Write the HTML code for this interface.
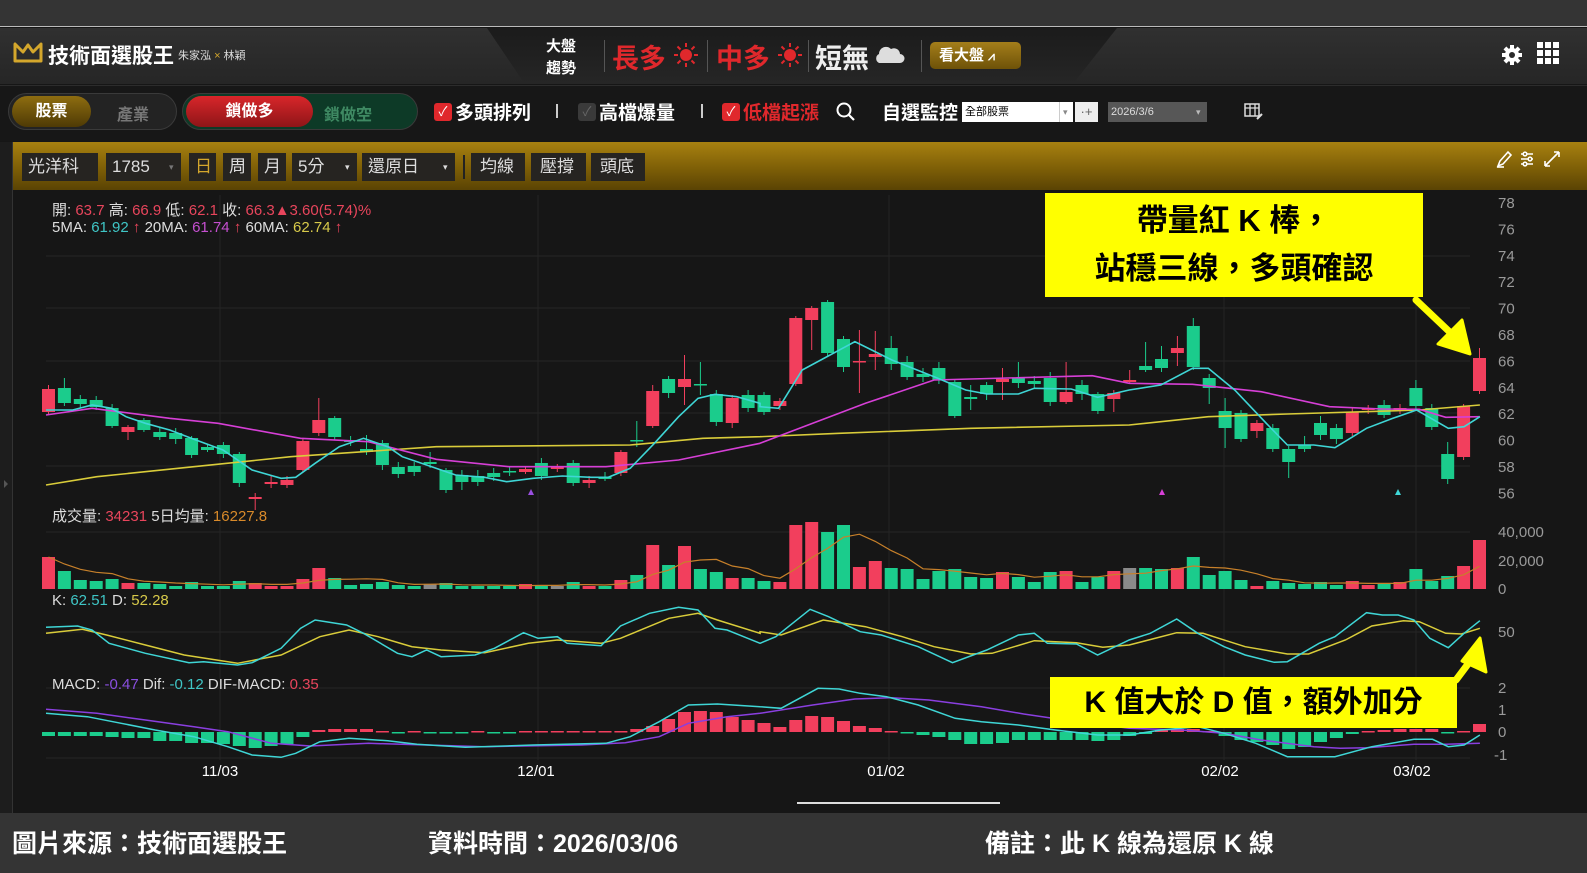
<!DOCTYPE html>
<html><head><meta charset="utf-8">
<style>
*{margin:0;padding:0;box-sizing:border-box}
body{width:1587px;height:873px;overflow:hidden;background:#161616;font-family:"Liberation Sans","Noto Sans CJK TC",sans-serif;position:relative;color:#fff}
.a{position:absolute}
.topbar{left:0;top:0;width:1587px;height:27px;background:#343434;border-bottom:1px solid #bbb}
.hdr{left:0;top:28px;width:1587px;height:56px;background:linear-gradient(#303030,#262626)}
.hc{left:487px;top:28px;width:630px;height:56px;background:linear-gradient(#1b1b1b,#262626);clip-path:polygon(0 0,100% 0,93% 100%,6% 100%)}
.row2{left:0;top:85px;width:1587px;height:56px;background:#171717;border-top:1px solid #2c2c2c}
.gold{left:13px;top:142px;width:1574px;height:48px;background:linear-gradient(#a88110,#7a5c06 60%,#5a4304)}
.box{position:absolute;top:153px;height:28px;background:#262421;color:#ddd;font-size:17px;line-height:28px;padding-left:6px}
.pill{position:absolute;border-radius:20px}
.cb{position:absolute;top:103px;width:18px;height:18px;border-radius:3px;font-size:13px;line-height:18px;text-align:center;color:#fff}
.t19{position:absolute;top:98px;font-size:19px;font-weight:bold}
.foot{left:0;top:813px;width:1587px;height:60px;background:#343434}
.ft{position:absolute;top:824px;font-size:25px;font-weight:bold;color:#fff}
</style></head><body>
<div class="a topbar"></div>
<div class="a hdr"></div>
<div class="a hc"></div>
<svg class="a" style="left:13px;top:40px" width="30" height="24" viewBox="0 0 30 24"><path d="M2 4 L2 21 L28 21 L28 4 L20 12 L15 5 L10 12 Z" fill="none" stroke="#d4a72c" stroke-width="3" stroke-linejoin="round"/></svg>
<div class="a" style="left:48px;top:40px;font-size:21px;font-weight:bold;color:#fff">技術面選股王</div>
<div class="a" style="left:178px;top:47px;font-size:11px;color:#ddd">朱家泓 <span style="color:#d4a72c">×</span> 林穎</div>
<div class="a" style="left:546px;top:36px;font-size:15px;font-weight:bold;line-height:22px;color:#fff">大盤<br>趨勢</div>
<div class="a" style="left:604px;top:40px;width:1px;height:32px;background:#555"></div>
<div class="a" style="left:612px;top:37px;font-size:27px;font-weight:bold;color:#e0282c">長多</div>
<svg class="a" style="left:673px;top:42px" width="26" height="26" viewBox="0 0 26 26"><circle cx="13" cy="13" r="6" fill="#e0282c"/><g stroke="#e0282c" stroke-width="2"><path d="M13 1v4M13 21v4M1 13h4M21 13h4M4.5 4.5l3 3M18.5 18.5l3 3M4.5 21.5l3-3M18.5 7.5l3-3"/></g></svg>
<div class="a" style="left:707px;top:40px;width:1px;height:32px;background:#555"></div>
<div class="a" style="left:716px;top:37px;font-size:27px;font-weight:bold;color:#e0282c">中多</div>
<svg class="a" style="left:777px;top:42px" width="26" height="26" viewBox="0 0 26 26"><circle cx="13" cy="13" r="6" fill="#e0282c"/><g stroke="#e0282c" stroke-width="2"><path d="M13 1v4M13 21v4M1 13h4M21 13h4M4.5 4.5l3 3M18.5 18.5l3 3M4.5 21.5l3-3M18.5 7.5l3-3"/></g></svg>
<div class="a" style="left:808px;top:40px;width:1px;height:32px;background:#555"></div>
<div class="a" style="left:815px;top:37px;font-size:27px;font-weight:bold;color:#eee">短無</div>
<svg class="a" style="left:873px;top:44px" width="32" height="20" viewBox="0 0 32 20"><path d="M6 19 A5 5 0 0 1 6 10 A7 7 0 0 1 18 5 A6 6 0 0 1 27 10 A4.5 4.5 0 0 1 27 19 Z" fill="#ddd"/></svg>
<div class="a" style="left:921px;top:40px;width:1px;height:32px;background:#555"></div>
<div class="a" style="left:930px;top:42px;width:91px;height:27px;border-radius:5px;background:linear-gradient(#a47e1a,#6e5208);font-size:15px;font-weight:bold;line-height:27px;padding-left:9px;color:#fff">看大盤 <span style="font-size:12px">⩘</span></div>
<svg class="a" style="left:1501px;top:44px" width="22" height="22" viewBox="0 0 22 22"><g fill="#fff"><circle cx="11" cy="11" r="7"/><rect x="9" y="1" width="4" height="20"/><rect x="1" y="9" width="20" height="4"/><rect x="9" y="1" width="4" height="20" transform="rotate(45 11 11)"/><rect x="9" y="1" width="4" height="20" transform="rotate(-45 11 11)"/></g><circle cx="11" cy="11" r="3" fill="#2a2a2a"/></svg>
<svg class="a" style="left:1537px;top:42px" width="22" height="22" viewBox="0 0 22 22"><g fill="#fff"><rect x="0" y="0" width="6" height="6"/><rect x="8" y="0" width="6" height="6"/><rect x="16" y="0" width="6" height="6"/><rect x="0" y="8" width="6" height="6"/><rect x="8" y="8" width="6" height="6"/><rect x="16" y="8" width="6" height="6"/><rect x="0" y="16" width="6" height="6"/><rect x="8" y="16" width="6" height="6"/><rect x="16" y="16" width="6" height="6"/></g></svg>

<div class="a row2"></div>
<div class="pill" style="left:8px;top:93px;width:169px;height:37px;background:#232323;border:1px solid #3a3a3a"></div>
<div class="pill" style="left:12px;top:96px;width:79px;height:31px;background:linear-gradient(#8e6d10,#4e3a05);font-size:16px;font-weight:bold;line-height:31px;text-align:center">股票</div>
<div class="a" style="left:117px;top:101px;font-size:16px;font-weight:bold;color:#777">產業</div>
<div class="pill" style="left:182px;top:93px;width:236px;height:37px;background:#0d3a27;border:1px solid #3a3a3a"></div>
<div class="pill" style="left:186px;top:96px;width:127px;height:31px;background:linear-gradient(#d8262a,#8e1518);font-size:16px;font-weight:bold;line-height:31px;text-align:center">鎖做多</div>
<div class="a" style="left:324px;top:101px;font-size:16px;font-weight:bold;color:#3f8a63">鎖做空</div>
<div class="cb" style="left:434px;background:#e0282c">✓</div>
<div class="t19" style="left:455px;color:#fff">多頭排列</div>
<div class="a" style="left:556px;top:104px;width:2px;height:14px;background:#ccc"></div>
<div class="cb" style="left:578px;background:#3a3a3a;color:#666">✓</div>
<div class="t19" style="left:599px;color:#fff">高檔爆量</div>
<div class="a" style="left:701px;top:104px;width:2px;height:14px;background:#ccc"></div>
<div class="cb" style="left:722px;background:#e0282c">✓</div>
<div class="t19" style="left:743px;color:#e0282c">低檔起漲</div>
<svg class="a" style="left:836px;top:102px" width="20" height="20" viewBox="0 0 20 20"><circle cx="8" cy="8" r="6.5" fill="none" stroke="#fff" stroke-width="2"/><path d="M13 13l5 5" stroke="#fff" stroke-width="2.2"/></svg>
<div class="t19" style="left:882px;color:#fff">自選監控</div>
<div class="a" style="left:962px;top:102px;width:111px;height:20px;background:#fff;color:#000;font-size:11px;line-height:20px;padding-left:3px">全部股票<span style="position:absolute;left:97px;top:0;color:#888;border-left:1px solid #ccc;padding-left:3px;font-size:9px">▾</span></div>
<div class="a" style="left:1075px;top:102px;width:23px;height:20px;background:#eee;color:#666;font-size:13px;line-height:20px;text-align:center">·+</div>
<div class="a" style="left:1108px;top:102px;width:99px;height:20px;background:#575757;color:#ddd;font-size:11px;line-height:20px;padding-left:3px">2026/3/6<span style="position:absolute;left:88px;font-size:9px;color:#bbb">▾</span></div>
<svg class="a" style="left:1244px;top:103px" width="20" height="18" viewBox="0 0 20 18"><rect x="1" y="1" width="14" height="12" fill="none" stroke="#ddd" stroke-width="1.5"/><path d="M1 5h14M6 1v12M11 1v12" stroke="#ddd" stroke-width="1.3"/><path d="M13 16l5-5" stroke="#ddd" stroke-width="2"/></svg>

<div class="a gold"></div>
<div class="a" style="left:0;top:142px;width:13px;height:671px;background:#1d1d1d;border-right:1px solid #333"></div>
<div class="box" style="left:22px;width:76px">光洋科</div>
<div class="box" style="left:106px;width:75px">1785<span style="position:absolute;left:63px;font-size:9px;color:#777">▾</span></div>
<div class="box" style="left:189px;width:27px;color:#d4a72c">日</div>
<div class="box" style="left:223px;width:28px">周</div>
<div class="box" style="left:258px;width:28px">月</div>
<div class="box" style="left:292px;width:65px">5分<span style="position:absolute;left:53px;font-size:9px">▾</span></div>
<div class="box" style="left:362px;width:93px">還原日<span style="position:absolute;left:81px;font-size:9px">▾</span></div>
<div class="a" style="left:463px;top:155px;width:2px;height:24px;background:#222"></div>
<div class="box" style="left:471px;width:54px;padding-left:9px">均線</div>
<div class="box" style="left:531px;width:55px;padding-left:9px">壓撐</div>
<div class="box" style="left:591px;width:54px;padding-left:9px">頭底</div>
<svg class="a" style="left:1495px;top:150px" width="70" height="18" viewBox="0 0 70 18"><g stroke="#fff" stroke-width="1.6" fill="none"><path d="M3 16l2-5 8-9 3 3-8 9z"/><path d="M2 17h7"/><path d="M26 4h12M26 9h12M26 14h12"/><circle cx="30" cy="4" r="1.8" fill="#7a5c06"/><circle cx="35" cy="9" r="1.8" fill="#7a5c06"/><circle cx="30" cy="14" r="1.8" fill="#7a5c06"/><path d="M50 16l14-14M50 16v-5M50 16h5M64 2h-5M64 2v5"/></g></svg>

<svg id="ch" class="a" style="left:0;top:0" width="1587" height="873"></svg>

<div class="a" style="left:1045px;top:193px;width:378px;height:104px;background:#ffff00;color:#000;font-size:31px;font-weight:bold;text-align:center;line-height:48px;padding-top:4px">帶量紅 K 棒，<br>站穩三線，多頭確認</div>
<div class="a" style="left:1050px;top:677px;width:407px;height:51px;background:#ffff00;color:#000;font-size:30px;font-weight:bold;text-align:center;line-height:51px">K 值大於 D 值，額外加分</div>

<div class="a foot"></div>
<div class="a" style="left:797px;top:802px;width:203px;height:2px;background:#ddd"></div>
<div class="ft" style="left:12px">圖片來源：技術面選股王</div>
<div class="ft" style="left:428px">資料時間：2026/03/06</div>
<div class="ft" style="left:985px">備註：此 K 線為還原 K 線</div>

<script>
var R="#f23f5d",G="#1bcc8c",S=[];
function X(i){return 48.5+i*15.9}
function add(s){S.push(s)}
[256,308,361,413,466,532,632,688,758].forEach(function(y){add('<line x1="46" x2="1470" y1="'+y+'" y2="'+y+'" stroke="#262626"/>')});
[220,538,889,1224,1416].forEach(function(x){add('<line x1="'+x+'" x2="'+x+'" y1="195" y2="760" stroke="#242424"/>')});
var C=[[0,R,389,412,385,414],[1,G,388,403,378,406],[2,G,399,404,395,408],[3,G,400,407,396,410],[4,G,408,426,404,428],[5,R,427,432,425,440],[6,G,420,430,418,432],[7,G,432,437,428,440],[8,G,433,439,428,444],[9,G,438,455,436,458],[10,G,447,450,444,452],[11,G,445,454,442,458],[12,G,454,483,452,487],[13,R,497,499,493,510],[14,R,482,484,476,488],[15,R,480,485,476,488],[16,R,441,470,438,472],[17,R,420,433,398,436],[18,G,418,437,416,440],[19,G,440,442,436,446],[20,G,449,452,435,455],[21,G,443,465,440,470],[22,G,467,474,462,478],[23,G,466,472,462,476],[24,G,462,464,452,468],[25,G,470,490,468,493],[26,G,475,482,470,490],[27,G,476,482,470,486],[28,G,473,477,468,481],[29,G,471,472,466,476],[30,R,469,472,466,474],[31,G,463,476,458,480],[32,R,467,469,464,472],[33,G,463,483,460,486],[34,R,480,483,476,488],[35,G,477,479,472,481],[36,R,452,473,450,476],[37,G,440,441,421,447],[38,R,391,426,385,428],[39,G,379,393,376,398],[40,R,379,387,355,405],[41,G,384,385,362,395],[42,G,394,422,390,426],[43,R,398,423,395,428],[44,G,395,408,390,412],[45,G,395,412,392,415],[46,R,401,406,398,410],[47,R,318,384,316,386],[48,R,308,320,306,350],[49,G,302,353,300,356],[50,G,339,367,336,372],[51,R,361,362,330,393],[52,R,354,357,331,370],[53,G,348,364,336,370],[54,G,362,377,356,380],[55,G,374,377,368,382],[56,G,368,380,362,384],[57,G,382,416,380,418],[58,G,397,399,385,410],[59,G,385,394,382,400],[60,R,379,382,368,400],[61,G,378,383,362,388],[62,G,381,384,376,388],[63,G,378,402,372,406],[64,R,392,402,362,404],[65,G,385,394,380,400],[66,G,394,411,392,414],[67,R,393,399,390,412],[68,R,380,382,370,384],[69,G,366,370,342,372],[70,G,359,368,346,372],[71,R,348,353,336,366],[72,G,326,367,318,370],[73,G,378,388,374,404],[74,G,411,428,398,448],[75,G,413,439,410,442],[76,R,423,431,420,438],[77,G,428,449,424,452],[78,G,449,462,446,478],[79,G,445,449,436,452],[80,G,423,435,416,440],[81,G,428,439,424,444],[82,R,412,433,408,436],[83,R,408,410,405,414],[84,G,405,415,400,418],[85,R,408,410,404,414],[86,G,388,406,380,410],[87,G,408,427,404,430],[88,G,454,479,442,484],[89,R,406,457,404,460],[90,R,358,391,348,394]];
C.forEach(function(c){var x=X(c[0]);add('<line x1="'+x+'" x2="'+x+'" y1="'+c[4]+'" y2="'+c[5]+'" stroke="'+c[1]+'"/>');add('<rect x="'+(x-6.5)+'" y="'+c[2]+'" width="13" height="'+Math.max(1.5,c[3]-c[2])+'" fill="'+c[1]+'"/>')});
function pl(a,b,oy,col,w){var p=[];a.forEach(function(q){p.push((q[0]/2.063).toFixed(1)+','+(oy+q[1]/3).toFixed(1))});b.forEach(function(q){p.push((760+q[0]/1.896).toFixed(1)+','+(oy+q[1]/3).toFixed(1))});add('<polyline points="'+p.join(' ')+'" fill="none" stroke="'+col+'" stroke-width="'+(w||1.6)+'"/>')}
pl([[95,885],[200,860],[400,830],[600,800],[900,770],[1300,765],[1450,745],[1568,740]],[[0,740],[150,730],[400,715],[700,705],[850,680],[1000,672],[1250,660],[1365,645]],190,"#d9cc3a");
pl([[95,675],[190,655],[350,685],[450,700],[620,745],[760,755],[900,808],[1050,830],[1250,830],[1400,810],[1568,760]],[[0,760],[100,700],[200,640],[330,570],[400,567],[630,557],[700,580],[820,583],[950,605],[1080,650],[1180,657],[1250,658],[1300,682],[1365,680]],190,"#d63fd6");
pl([[95,660],[150,660],[190,645],[230,655],[260,680],[300,700],[350,720],[400,748],[460,780],[500,820],[520,840],[580,865],[610,862],[650,820],[700,770],[750,745],[800,770],[830,800],[880,825],[910,840],[940,855],[1000,862],[1045,875],[1100,865],[1160,858],[1220,862],[1255,862],[1300,835],[1350,760],[1400,680],[1440,625],[1475,613],[1520,620],[1568,640]],[[0,650],[35,655],[80,540],[180,455],[250,510],[330,560],[390,600],[430,612],[490,612],[520,595],[590,597],[640,622],[700,600],[760,585],[820,535],[850,535],[900,600],[960,700],[1000,765],[1050,765],[1090,773],[1150,715],[1200,685],[1245,660],[1305,715],[1335,710],[1365,680]],190,"#3fd6d6");
add('<path d="M528 495l3-6 3 6z" fill="#9a4fe0"/><path d="M1159 495l3-6 3 6z" fill="#d63fd6"/><path d="M1395 495l3-6 3 6z" fill="#3fd6d6"/>');
var V=[32,18,9,8,10,6,6,5,3,7,3,3,8,6,3,3,10,21,11,4,5,7,4,3,5,6,3,3,3,3,5,4,3,7,3,3,9,14,44,24,43,20,17,11,11,8,7,64,67,57,64,22,28,21,20,10,18,20,12,11,17,12,7,17,18,7,12,18,21,21,20,21,32,14,18,9,3,8,6,5,7,4,8,4,5,7,20,8,13,23,49];
var vp=[];V.forEach(function(h,i){var col=(i==24||i==32||i==68)?"#8a8a8a":C[i][1];add('<rect x="'+(X(i)-6.5)+'" y="'+(589-h)+'" width="13" height="'+h+'" fill="'+col+'"/>');var s=0,n=0;for(var k=Math.max(0,i-4);k<=i;k++){s+=V[k];n++}vp.push(X(i).toFixed(1)+','+(589-s/n).toFixed(1))});
add('<polyline points="'+vp.join(' ')+'" fill="none" stroke="#c7802a" stroke-width="1.2"/>');
pl([[95,400],[170,388],[220,405],[300,435],[380,465],[490,490],[580,465],[660,410],[720,390],[780,410],[850,440],[910,450],[1000,458],[1090,430],[1150,420],[1240,430],[1280,415],[1380,355],[1440,340],[1480,360],[1568,400]],[[0,395],[40,405],[120,360],[200,380],[270,410],[330,440],[400,462],[440,460],[520,422],[600,428],[650,442],[700,435],[790,398],[840,400],[920,440],[1000,462],[1040,462],[1110,420],[1160,378],[1220,362],[1250,365],[1300,400],[1330,402],[1365,385]],500,"#d9cc3a",1.5);
pl([[95,382],[160,378],[190,390],[225,430],[300,460],[390,488],[420,485],[490,495],[520,488],[580,445],[620,385],[650,360],[715,375],[750,400],[820,460],[850,470],[880,450],[910,470],[980,465],[1020,445],[1080,398],[1110,415],[1150,410],[1170,430],[1240,437],[1280,378],[1340,340],[1400,322],[1440,330],[1475,385],[1500,390],[1568,430]],[[0,430],[30,410],[95,328],[130,350],[190,395],[230,405],[300,440],[365,488],[430,450],[490,405],[520,400],[545,430],[600,432],[640,465],[700,420],[740,400],[790,357],[830,400],[880,440],[920,465],[975,487],[1000,485],[1060,430],[1090,410],[1150,338],[1180,345],[1210,345],[1240,360],[1270,415],[1305,443],[1335,400],[1365,362]],500,"#3fd6d6",1.5);
var H=[-4,-4,-4,-4,-5,-6,-6,-9,-9,-11,-11,-12,-14,-16,-14,-12,-5,2,3,3,3,1,-1,1,-1,-1,-1,1,-1,-1,1,1,1,1,1,1,1,3,6,13,20,21,20,15,12,9,5,12,16,15,11,6,4,1,-1,-3,-5,-8,-12,-12,-11,-8,-8,-8,-8,-8,-9,-8,-4,-2,2,3,3,1,-4,-8,-10,-13,-17,-15,-10,-6,-2,1,2,3,3,3,-1,1,8];
H.forEach(function(h,i){var col=h>0?R:G;var y=h>0?732-h:732;add('<rect x="'+(X(i)-6.5)+'" y="'+y+'" width="13" height="'+Math.max(1.5,Math.abs(h))+'" fill="'+col+'"/>')});
pl([[95,628],[200,640],[300,660],[400,680],[470,695],[560,730],[640,738],[760,730],[880,735],[1000,740],[1200,735],[1290,728],[1360,710],[1420,670],[1500,650],[1568,640]],[[0,640],[100,615],[180,597],[250,593],[320,600],[420,620],[500,642],[600,665],[700,685],[800,690],[880,700],[950,720],[1050,740],[1100,745],[1150,743],[1240,733],[1300,733],[1365,730]],500,"#8a3fe0",1.5);
pl([[95,640],[180,650],[250,670],[320,690],[400,710],[470,740],[520,765],[580,772],[610,760],[660,725],[720,715],[800,722],[860,733],[960,742],[1100,735],[1250,730],[1300,710],[1360,665],[1420,615],[1480,612],[1568,620]],[[0,620],[40,625],[110,565],[150,567],[190,580],[240,590],[300,615],[370,655],[420,665],[490,675],[560,690],[640,705],[700,705],[760,690],[830,680],[880,700],[940,730],[1000,770],[1090,770],[1160,740],[1240,718],[1275,718],[1305,740],[1335,735],[1365,705]],500,"#3fd6d6",1.5);
var T='';for(var p=78;p>=56;p-=2){T+='<text x="1498" y="'+(208+(78-p)*13.2)+'">'+p+'</text>'}
T+='<text x="1498" y="537">40,000</text><text x="1498" y="566">20,000</text><text x="1498" y="594">0</text><text x="1498" y="637">50</text><text x="1498" y="693">2</text><text x="1498" y="715">1</text><text x="1498" y="737">0</text><text x="1494" y="760">-1</text>';
add('<g font-size="15" fill="#9a9a9a" font-family="Liberation Sans,sans-serif">'+T+'</g>');
add('<g font-size="15" fill="#fff" text-anchor="middle"><text x="220" y="776">11/03</text><text x="536" y="776">12/01</text><text x="886" y="776">01/02</text><text x="1220" y="776">02/02</text><text x="1412" y="776">03/02</text></g>');
add('<g font-size="15" font-family="Liberation Sans,Noto Sans CJK TC,sans-serif"><text x="52" y="215" fill="#ddd">開: <tspan fill="#e8455c">63.7</tspan>  高: <tspan fill="#e8455c">66.9</tspan>  低: <tspan fill="#e8455c">62.1</tspan>  收: <tspan fill="#e8455c">66.3▲3.60(5.74)%</tspan></text><text x="52" y="232" fill="#ddd">5MA: <tspan fill="#3fc6c6">61.92</tspan>  <tspan fill="#e8455c">↑</tspan>  20MA: <tspan fill="#c54fd0">61.74</tspan>  <tspan fill="#e8455c">↑</tspan>  60MA: <tspan fill="#d7c94a">62.74</tspan>  <tspan fill="#e8455c">↑</tspan></text><text x="52" y="521" fill="#ddd">成交量: <tspan fill="#e8455c">34231</tspan>  5日均量: <tspan fill="#d98a2a">16227.8</tspan></text><text x="52" y="605" fill="#ddd">K: <tspan fill="#3fc6c6">62.51</tspan>  D: <tspan fill="#d7c94a">52.28</tspan></text><text x="52" y="689" fill="#ddd">MACD: <tspan fill="#8a4fe0">-0.47</tspan>  Dif: <tspan fill="#3fc6c6">-0.12</tspan>  DIF-MACD: <tspan fill="#e8455c">0.35</tspan></text></g>');
add('<g fill="#ffff00" stroke="#ffff00" stroke-width="7" stroke-linecap="round"><line x1="1416" y1="300" x2="1456" y2="338"/><path d="M1470 354 L1438 344 L1462 320 Z" stroke-width="3" stroke-linejoin="round"/><line x1="1456" y1="680" x2="1474" y2="656"/><path d="M1480 638 L1486 672 L1462 661 Z" stroke-width="3" stroke-linejoin="round"/></g>');
add('<path d="M4 480l4 4-4 4z" fill="#555"/>');
document.getElementById('ch').innerHTML=S.join('');
</script>
</body></html>
